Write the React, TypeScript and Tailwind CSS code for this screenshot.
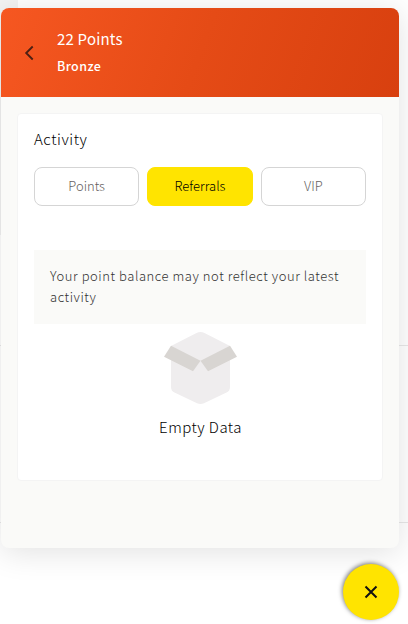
import { useState } from 'react';

const TABS = ['Points', 'Referrals', 'VIP'];

function EmptyBox() {
    return (
        <svg width="74" height="74" viewBox="0 0 74 74" className="block">
            <path d="M8 15 33.500 2Q37.500 0 41.500 2L67 15V56Q67 59.500 63.500 61.500L41 72.200Q37.500 73.800 34 72.200L11.500 61.500Q8 59.500 8 56Z" fill="#efedee" />
            <path d="M8 14.800 37.500 29.800 30 40.300 1 25.800Z" fill="#d8d5d2" />
            <path d="M67 14.800 37.500 29.800 45 40.300 74 25.800Z" fill="#d8d5d2" />
        </svg>
    );
}

function Header() {
    return (
        <header className="flex h-[89px] items-start bg-[linear-gradient(110deg,#f65721_0%,#e54b16_50%,#d8400f_100%)] text-white">
            <button aria-label="Back" className="mt-[37px] ml-[23px] w-[10px]">
                <svg width="10" height="16" viewBox="0 0 10 16" fill="none" stroke="#4d2013" strokeWidth="1.9">
                    <path d="M8.700 1.500 2.200 8l6.500 6.500" />
                </svg>
            </button>
            <div className="mt-[19px] ml-[23px]">
                <div className="h-6 text-[15px] leading-6 tracking-[0.2px]">22 Points</div>
                <div className="mt-[5px] h-5 text-[12.5px] leading-5 font-medium tracking-[0.4px]">Bronze</div>
            </div>
        </header>
    );
}

export default function App() {
    const [active, setActive] = useState('Referrals');

    return (
        <div className="relative h-[624px] w-[408px] overflow-hidden bg-white font-['Noto_Sans_CJK_JP','Noto_Sans_CJK_SC',sans-serif]">
            {/* page behind the widget */}
            <div className="absolute top-0 left-0 h-[235px] w-[18px] bg-[#f3f3f3]" />
            <div className="absolute top-[345px] left-0 h-px w-full bg-[#e8e8e8]" />
            <div className="absolute top-[522px] left-0 h-px w-full bg-[#e8e8e8]" />

            <main className="relative mt-2 ml-px h-[540px] w-[398px] overflow-hidden rounded-lg bg-[#fafaf8] shadow-[0_4px_32px_rgba(0,0,0,0.12)]">
                <Header />
                <section className="mx-4 mt-4 flex h-[368px] flex-col rounded-[4px] border border-[#f4f4f4] bg-white px-4">
                    <h2 className="mt-[13px] h-6 text-[15px] leading-6 font-light tracking-[0.55px] text-black">Activity</h2>
                    <div className="mt-4 flex gap-2">
                        {TABS.map((tab) => (
                            <button
                                key={tab}
                                onClick={() => setActive(tab)}
                                className={`h-[39px] flex-1 rounded-lg border pb-[2px] text-[13px] leading-5 font-light ${tab === active ? 'border-[#ffe400] bg-[#ffe400] text-black' : 'border-[#d5d5d5] bg-white text-[#665f5f]'}`}
                            >
                                {tab}
                            </button>
                        ))}
                    </div>
                    <p className="mt-[44px] h-[74px] bg-[#fafaf8] px-4 pt-[15px] text-[13px] leading-[21px] font-light tracking-[0.55px] text-[#333]">
                        Your point balance may not reflect your latest activity
                    </p>
                    <div className="mt-[7px] flex flex-col items-center">
                        <EmptyBox />
                        <div className="mt-[10px] pl-px text-[15px] leading-6 font-light tracking-[0.47px] text-black">Empty Data</div>
                    </div>
                </section>
            </main>

            <button
                aria-label="Close"
                className="absolute top-[564px] left-[343px] flex size-14 items-center justify-center rounded-full bg-[#ffe400] shadow-[-1px_-1px_4px_rgba(0,0,0,0.5)]"
            >
                <svg width="14" height="14" viewBox="0 0 14 14" stroke="#111" strokeWidth="2">
                    <path d="m1.500 1.500 11 11M12.500 1.500l-11 11" />
                </svg>
            </button>
        </div>
    );
}
